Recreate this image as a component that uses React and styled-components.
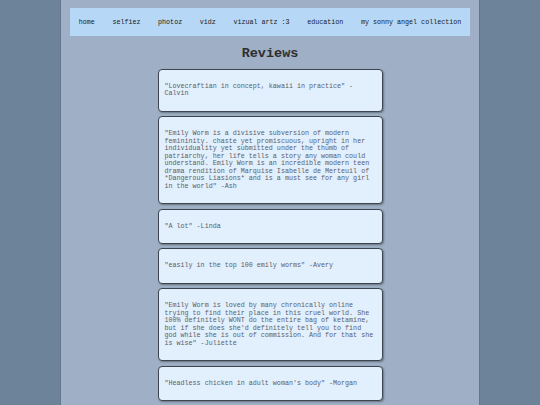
import styled, { createGlobalStyle } from "styled-components";

const GlobalStyle = createGlobalStyle`
  html, body {
    margin: 0;
    padding: 0;
    background-color: #6c8399;
    font-family: "Liberation Mono", "Courier New", monospace;
  }
`;

const Page = styled.div`
  width: 400px;
  margin: 0 auto;
  min-height: 100vh;
  padding: 8px 9px 0 9px;
  background-color: #9fb0c6;
  border-left: 1px solid #61778d;
  border-right: 1px solid #61778d;
  display: flex;
  flex-direction: column;
  align-items: center;
`;

const Nav = styled.nav`
  width: 100%;
  height: 28px;
  background-color: #b6d8f6;
  display: flex;
  align-items: center;
  justify-content: center;
`;

const NavLink = styled.a`
  padding: 0 8.8px;
  font-size: 6.7px;
  color: #1a1a1a;
  text-decoration: none;
  white-space: nowrap;
  cursor: pointer;
`;

const Title = styled.h2`
  margin: 10px 0 8px 0;
  font-size: 13.5px;
  line-height: 15px;
  font-weight: bold;
  color: #2e2e2e;
`;

const Reviews = styled.div`
  display: flex;
  flex-direction: column;
  gap: 4.5px;
  padding-bottom: 10px;
`;

const Card = styled.div`
  width: 211px;
  padding: 0 6px;
  background-color: #e2effc;
  border: 1px solid #3d4650;
  border-radius: 4px;
  box-shadow: 1px 1px 2px rgba(0, 0, 0, 0.35);
`;

const Quote = styled.p`
  margin: 13px 0;
  font-size: 6.7px;
  line-height: 7.45px;
  color: #5c6168;
`;

const links = [
  "home",
  "selfiez",
  "photoz",
  "vidz",
  "vizual artz :3",
  "education",
  "my sonny angel collection",
];

const reviews = [
  "\"Lovecraftian in concept, kawaii in practice\" - Calvin",
  "\"Emily Worm is a divisive subversion of modern femininity. chaste yet promiscuous, upright in her individuality yet submitted under the thumb of patriarchy, her life tells a story any woman could understand. Emily Worm is an incredible modern teen drama rendition of Marquise Isabelle de Merteuil of *Dangerous Liasions* and is a must see for any girl in the world\" -Ash",
  "\"A lot\" -Linda",
  "\"easily in the top 100 emily worms\" -Avery",
  "\"Emily Worm is loved by many chronically online trying to find their place in this cruel world. She 100% definitely WONT do the entire bag of ketamine, but if she does she'd definitely tell you to find god while she is out of commission. And for that she is wise\" -Juliette",
  "\"Headless chicken in adult woman's body\" -Morgan",
];

function App() {
  return (
    <>
      <GlobalStyle />
      <Page>
        <Nav>
          {links.map((l) => (
            <NavLink key={l}>{l}</NavLink>
          ))}
        </Nav>
        <Title>Reviews</Title>
        <Reviews>
          {reviews.map((r, i) => (
            <Card key={i}>
              <Quote>{r}</Quote>
            </Card>
          ))}
        </Reviews>
      </Page>
    </>
  );
}

export default App;
